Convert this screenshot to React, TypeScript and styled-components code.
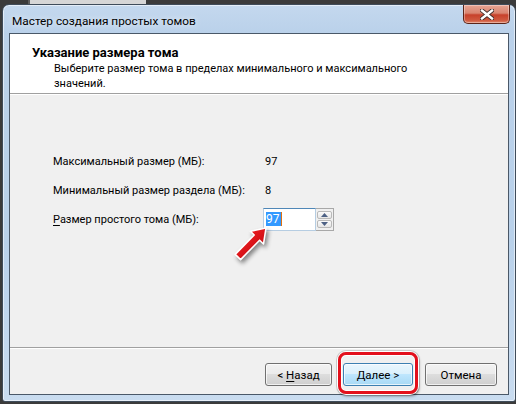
import React from "react";
import styled, { createGlobalStyle } from "styled-components";

const GlobalStyle = createGlobalStyle`
  html, body {
    margin: 0;
    padding: 0;
  }
  body {
    width: 516px;
    height: 404px;
    overflow: hidden;
    background:
      linear-gradient(to right, transparent 28px, #5e5e5e 28px, #5e5e5e 30px, #d6d6d6 30px, #d6d6d6 146px, transparent 146px) top left / 100% 4px no-repeat,
      #3b3b3b;
    font-family: Roboto, "Noto Sans", sans-serif;
    font-size: 11px;
    color: #000;
  }
`;

const Window = styled.div`
  box-sizing: border-box;
  width: 514px;
  height: 398px;
  margin: 4px 0 0 2px;
  border: 1px solid #3f4c5a;
  border-radius: 7px 7px 3px 3px;
  background: linear-gradient(to bottom, #c4d8ee 0px, #bad1ea 28px, #b9d1ea 60%, #c9dcf0 100%);
  box-shadow: inset 0 0 0 1px rgba(255, 255, 255, 0.55);
  padding: 0 6px 6px 6px;
  display: flex;
  flex-direction: column;
`;

const TitleBar = styled.div`
  height: 28px;
  display: flex;
  align-items: flex-start;
`;

const Title = styled.div`
  padding: 8px 0 0 3px;
  line-height: 16px;
  font-size: 11.8px;
  color: #000;
  text-shadow: 0 0 6px rgba(255, 255, 255, 0.9);
`;

const CloseButton = styled.div`
  margin-left: auto;
  margin-right: -1px;
  width: 47px;
  height: 19px;
  box-sizing: border-box;
  border: 1px solid #5b2418;
  border-top: none;
  border-radius: 0 0 5px 5px;
  background: linear-gradient(to bottom, #e8a493 0%, #d98570 45%, #c7412b 55%, #cf5a3f 85%, #e2866b 100%);
  box-shadow: inset 0 0 0 1px rgba(255, 255, 255, 0.35);
  display: flex;
  align-items: center;
  justify-content: center;
`;

const Client = styled.div`
  flex: 1;
  border: 1px solid #4a5868;
  background: #f0f0f0;
  display: flex;
  flex-direction: column;
`;

const Header = styled.div`
  background: #fff;
  height: 59px;
  box-sizing: border-box;
  padding: 11px 0 0 22px;
`;

const HeaderTitle = styled.div`
  font-weight: bold;
  line-height: 15px;
  font-size: 13px;
`;

const HeaderText = styled.div`
  margin: 1px 0 0 22px;
  line-height: 15px;
  width: 360px;
`;

const Separator = styled.div`
  height: 0;
  border-top: 1px solid #a0a0a0;
  border-bottom: 1px solid #ffffff;
`;

const Body = styled.div`
  flex: 1;
  padding: 52px 0 0 43px;
`;

const FormGrid = styled.div`
  display: grid;
  grid-template-columns: 210px auto;
  grid-auto-rows: 29px;
  align-items: center;
`;

const Label = styled.div`
  line-height: 16px;
  white-space: nowrap;
`;

const Value = styled.div`
  padding-left: 2px;
  line-height: 16px;
`;

const U = styled.span`
  text-decoration: underline;
  text-underline-offset: 2px;
`;

const SpinWrap = styled.div`
  position: relative;
  display: flex;
  width: 71px;
  height: 23px;
`;

const SpinInput = styled.div`
  box-sizing: border-box;
  width: 53px;
  height: 23px;
  background: #fff;
  border: 1px solid #b6cde2;
  border-top-color: #4f87b7;
  padding: 2px 0 0 2px;
  line-height: 16px;
  font-size: 12px;
`;

const Selected = styled.span`
  background: #3399ff;
  color: #fff;
  padding: 0 1px 0 0;
  border-right: 1px solid #e07010;
`;

const SpinButtons = styled.div`
  box-sizing: border-box;
  width: 18px;
  height: 23px;
  border: 1px solid #a8a8a8;
  border-left: none;
  padding: 2px 1px;
  display: flex;
  flex-direction: column;
  gap: 1px;
`;

const SpinButton = styled.div`
  flex: 1;
  border: 1px solid #b9b9b9;
  border-radius: 2px;
  background: linear-gradient(to bottom, #fafafa, #e6e6e6);
  display: flex;
  align-items: center;
  justify-content: center;
`;

const Arrow = styled.svg`
  position: absolute;
  left: -33px;
  top: 15px;
  overflow: visible;
  filter: drop-shadow(2px 3px 2px rgba(0, 0, 0, 0.45));
`;

const Footer = styled.div`
  height: 45px;
  box-sizing: border-box;
  padding: 14px 11px 0 0;
  display: flex;
  justify-content: flex-end;
  align-items: flex-start;
`;

const Button = styled.div<{ $w: number; $default?: boolean; $gap?: number }>`
  position: relative;
  box-sizing: border-box;
  width: ${(p) => p.$w}px;
  height: 23px;
  margin-left: ${(p) => p.$gap ?? 0}px;
  border: 1px solid ${(p) => (p.$default ? "#3c7fb1" : "#707070")};
  border-radius: 3px;
  background: ${(p) =>
    p.$default
      ? "linear-gradient(to bottom, #eaf6fd 0%, #d9f0fc 50%, #bee6fd 50%, #a7d9f5 100%)"
      : "linear-gradient(to bottom, #f2f2f2 0%, #ebebeb 50%, #dddddd 50%, #cfcfcf 100%)"};
  box-shadow: inset 0 0 0 1px rgba(255, 255, 255, 0.7);
  display: flex;
  align-items: center;
  justify-content: center;
  line-height: 16px;
  font-size: 11.5px;
`;

const Highlight = styled.div`
  position: absolute;
  left: -6px;
  right: -6px;
  top: -12px;
  bottom: -9px;
  border: 3px solid #e3101c;
  border-radius: 8px;
  box-shadow: 0 0 0 1px #fff, 0 0 0 2px rgba(0, 0, 0, 0.15), 1px 2px 3px rgba(0, 0, 0, 0.45), inset 0 0 0 1px #fff;
  pointer-events: none;
`;

function App() {
  return (
    <>
      <GlobalStyle />
      <Window>
        <TitleBar>
          <Title>Мастер создания простых томов</Title>
          <CloseButton>
            <svg width="14" height="11" viewBox="0 0 14 11">
              <path
                d="M2 1.5 L12 9.5 M12 1.5 L2 9.5"
                stroke="#3d2a28"
                strokeWidth="4.2"
                strokeLinecap="square"
              />
              <path
                d="M2 1.5 L12 9.5 M12 1.5 L2 9.5"
                stroke="#ffffff"
                strokeWidth="2.4"
                strokeLinecap="square"
              />
            </svg>
          </CloseButton>
        </TitleBar>
        <Client>
          <Header>
            <HeaderTitle>Указание размера тома</HeaderTitle>
            <HeaderText>
              Выберите размер тома в пределах минимального и максимального значений.
            </HeaderText>
          </Header>
          <Separator />
          <Body>
            <FormGrid>
              <Label>Максимальный размер (МБ):</Label>
              <Value>97</Value>
              <Label>Минимальный размер раздела (МБ):</Label>
              <Value>8</Value>
              <Label>
                <U>Р</U>азмер простого тома (МБ):
              </Label>
              <SpinWrap>
                <SpinInput>
                  <Selected>97</Selected>
                </SpinInput>
                <SpinButtons>
                  <SpinButton>
                    <svg width="7" height="4" viewBox="0 0 7 4">
                      <path d="M0 4 L3.5 0 L7 4 Z" fill="#4d6185" />
                    </svg>
                  </SpinButton>
                  <SpinButton>
                    <svg width="7" height="4" viewBox="0 0 7 4">
                      <path d="M0 0 L3.5 4 L7 0 Z" fill="#4d6185" />
                    </svg>
                  </SpinButton>
                </SpinButtons>
                <Arrow width="42" height="44" viewBox="0 0 42 44">
                  <defs>
                    <linearGradient id="arrowRed" x1="0" y1="0" x2="1" y2="1">
                      <stop offset="0" stopColor="#ff2a2a" />
                      <stop offset="1" stopColor="#b8000a" />
                    </linearGradient>
                  </defs>
                  <polygon
                    points="36,5 33.5,21 29.6,17.2 10.6,36.6 5.2,31.4 24.2,12 20.4,8.3"
                    fill="url(#arrowRed)"
                    stroke="#ffffff"
                    strokeWidth="1.6"
                    strokeLinejoin="round"
                  />
                </Arrow>
              </SpinWrap>
            </FormGrid>
          </Body>
          <Separator />
          <Footer>
            <Button $w={67}>
              &lt;&nbsp;<U>Н</U>азад
            </Button>
            <Button $w={70} $gap={11} $default>
              <U>Д</U>алее &gt;
              <Highlight />
            </Button>
            <Button $w={72} $gap={12}>
              Отмена
            </Button>
          </Footer>
        </Client>
      </Window>
    </>
  );
}

export default App;
